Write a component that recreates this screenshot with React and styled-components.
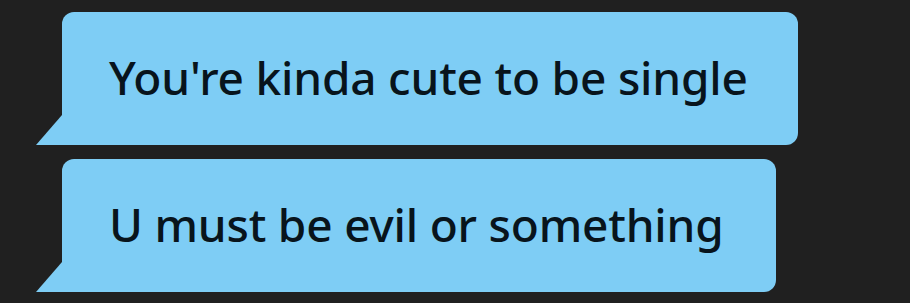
import React from "react";
import styled, { createGlobalStyle } from "styled-components";

const Global = createGlobalStyle`
  html, body { margin: 0; padding: 0; background: #202020; }
  body { width: 910px; height: 303px; overflow: hidden; }
`;

const Thread = styled.div`
  display: flex;
  flex-direction: column;
  align-items: flex-start;
  gap: 14px;
  padding: 12px 0 0 62px;
`;

const Bubble = styled.div`
  position: relative;
  box-sizing: border-box;
  width: ${(p) => p.$w}px;
  height: 133px;
  display: flex;
  align-items: center;
  padding: 0 0 4px 47px;
  background: #7ecdf5;
  border-radius: 12px 12px 12px 0;
  color: #08141c;
  font-family: "Noto Sans", "Open Sans", sans-serif;
  font-weight: 500;
  font-size: 46px;
  letter-spacing: -0.2px;
  white-space: nowrap;
`;

const Tail = styled.svg`
  position: absolute;
  left: -26px;
  bottom: 0;
  width: 27px;
  height: 30px;
`;

function Message({ text, width }) {
  return (
    <Bubble $w={width}>
      <Tail viewBox="0 0 27 30">
        <polygon points="26,0 27,0 27,30 0,30" fill="#7ecdf5" />
      </Tail>
      {text}
    </Bubble>
  );
}

export default function App() {
  return (
    <>
      <Global />
      <Thread>
        <Message text="You're kinda cute to be single" width={736} />
        <Message text="U must be evil or something" width={714} />
      </Thread>
    </>
  );
}
